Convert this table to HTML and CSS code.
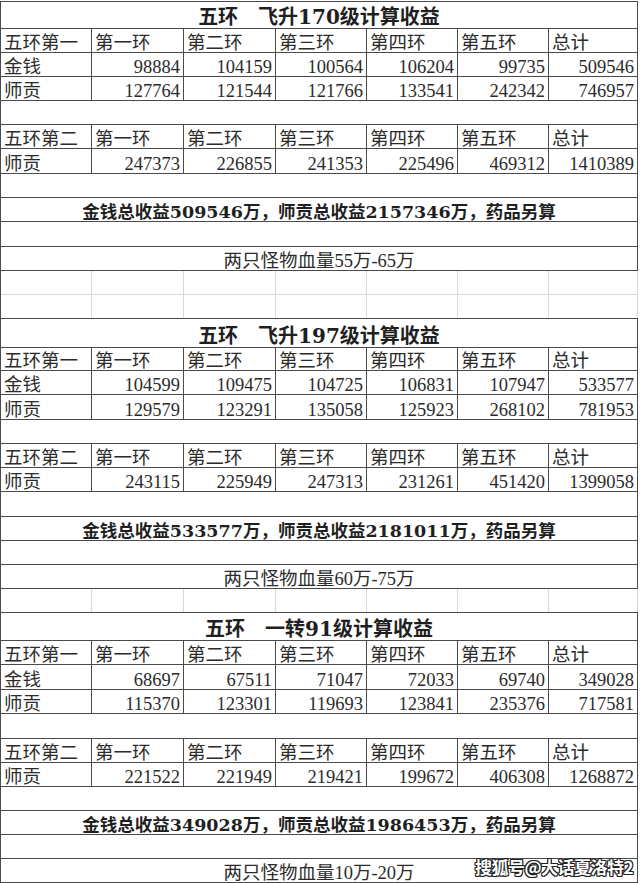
FILE: index.html
```html
<!DOCTYPE html>
<html lang="zh-CN">
<head>
<meta charset="utf-8">
<title>五环收益</title>
<link rel="stylesheet" href="styles.css">
</head>
<body>
<div class="sheet">
  <!-- 区块一 -->
  <div class="row title"><div class="cell span">五环　飞升170级计算收益</div></div>
  <div class="row"><div class="cell">五环第一</div><div class="cell">第一环</div><div class="cell">第二环</div><div class="cell">第三环</div><div class="cell">第四环</div><div class="cell">第五环</div><div class="cell">总计</div></div>
  <div class="row"><div class="cell">金钱</div><div class="cell num">98884</div><div class="cell num">104159</div><div class="cell num">100564</div><div class="cell num">106204</div><div class="cell num">99735</div><div class="cell num">509546</div></div>
  <div class="row"><div class="cell">师贡</div><div class="cell num">127764</div><div class="cell num">121544</div><div class="cell num">121766</div><div class="cell num">133541</div><div class="cell num">242342</div><div class="cell num">746957</div></div>
  <div class="row"><div class="cell span"></div></div>
  <div class="row"><div class="cell">五环第二</div><div class="cell">第一环</div><div class="cell">第二环</div><div class="cell">第三环</div><div class="cell">第四环</div><div class="cell">第五环</div><div class="cell">总计</div></div>
  <div class="row tall"><div class="cell">师贡</div><div class="cell num">247373</div><div class="cell num">226855</div><div class="cell num">241353</div><div class="cell num">225496</div><div class="cell num">469312</div><div class="cell num">1410389</div></div>
  <div class="row"><div class="cell span"></div></div>
  <div class="row sum"><div class="cell span">金钱总收益509546万，师贡总收益2157346万，药品另算</div></div>
  <div class="row tall"><div class="cell span"></div></div>
  <div class="row"><div class="cell span">两只怪物血量55万-65万</div></div>
  <div class="row light"><div class="cell"></div><div class="cell"></div><div class="cell"></div><div class="cell"></div><div class="cell"></div><div class="cell"></div><div class="cell"></div></div>
  <div class="row light edge"><div class="cell"></div><div class="cell"></div><div class="cell"></div><div class="cell"></div><div class="cell"></div><div class="cell"></div><div class="cell"></div></div>

  <!-- 区块二 -->
  <div class="row title t29"><div class="cell span">五环　飞升197级计算收益</div></div>
  <div class="row short"><div class="cell">五环第一</div><div class="cell">第一环</div><div class="cell">第二环</div><div class="cell">第三环</div><div class="cell">第四环</div><div class="cell">第五环</div><div class="cell">总计</div></div>
  <div class="row"><div class="cell">金钱</div><div class="cell num">104599</div><div class="cell num">109475</div><div class="cell num">104725</div><div class="cell num">106831</div><div class="cell num">107947</div><div class="cell num">533577</div></div>
  <div class="row tall"><div class="cell">师贡</div><div class="cell num">129579</div><div class="cell num">123291</div><div class="cell num">135058</div><div class="cell num">125923</div><div class="cell num">268102</div><div class="cell num">781953</div></div>
  <div class="row"><div class="cell span"></div></div>
  <div class="row"><div class="cell">五环第二</div><div class="cell">第一环</div><div class="cell">第二环</div><div class="cell">第三环</div><div class="cell">第四环</div><div class="cell">第五环</div><div class="cell">总计</div></div>
  <div class="row"><div class="cell">师贡</div><div class="cell num">243115</div><div class="cell num">225949</div><div class="cell num">247313</div><div class="cell num">231261</div><div class="cell num">451420</div><div class="cell num">1399058</div></div>
  <div class="row tall"><div class="cell span"></div></div>
  <div class="row sum"><div class="cell span">金钱总收益533577万，师贡总收益2181011万，药品另算</div></div>
  <div class="row"><div class="cell span"></div></div>
  <div class="row"><div class="cell span">两只怪物血量60万-75万</div></div>
  <div class="row light edge"><div class="cell"></div><div class="cell"></div><div class="cell"></div><div class="cell"></div><div class="cell"></div><div class="cell"></div><div class="cell"></div></div>

  <!-- 区块三 -->
  <div class="row title t28"><div class="cell span">五环　一转91级计算收益</div></div>
  <div class="row"><div class="cell">五环第一</div><div class="cell">第一环</div><div class="cell">第二环</div><div class="cell">第三环</div><div class="cell">第四环</div><div class="cell">第五环</div><div class="cell">总计</div></div>
  <div class="row tall"><div class="cell">金钱</div><div class="cell num">68697</div><div class="cell num">67511</div><div class="cell num">71047</div><div class="cell num">72033</div><div class="cell num">69740</div><div class="cell num">349028</div></div>
  <div class="row"><div class="cell">师贡</div><div class="cell num">115370</div><div class="cell num">123301</div><div class="cell num">119693</div><div class="cell num">123841</div><div class="cell num">235376</div><div class="cell num">717581</div></div>
  <div class="row tall"><div class="cell span"></div></div>
  <div class="row"><div class="cell">五环第二</div><div class="cell">第一环</div><div class="cell">第二环</div><div class="cell">第三环</div><div class="cell">第四环</div><div class="cell">第五环</div><div class="cell">总计</div></div>
  <div class="row"><div class="cell">师贡</div><div class="cell num">221522</div><div class="cell num">221949</div><div class="cell num">219421</div><div class="cell num">199672</div><div class="cell num">406308</div><div class="cell num">1268872</div></div>
  <div class="row"><div class="cell span"></div></div>
  <div class="row sum"><div class="cell span">金钱总收益349028万，师贡总收益1986453万，药品另算</div></div>
  <div class="row"><div class="cell span"></div></div>
  <div class="row"><div class="cell span">两只怪物血量10万-20万</div></div>
</div>
<div class="watermark">搜狐号@大话夏洛特2</div>
</body>
</html>
```

FILE: styles.css
```css
* {
  box-sizing: border-box;
}

html, body {
  margin: 0;
  padding: 0;
  background: #ffffff;
}

body {
  position: relative;
  width: 640px;
  height: 883px;
  overflow: hidden;
  color: #2b2b2b;
  font-family: "Liberation Serif", "Noto Sans CJK SC", serif;
}

.sheet {
  width: 638px;
  margin-top: 1px;
  border-top: 1px solid #4a4a4a;
  border-left: 1px solid #4a4a4a;
}

.row {
  display: grid;
  grid-template-columns: 91px 92px 92px 91px 91px 91px 89px;
  height: 24px;
  border-bottom: 1px solid #4a4a4a;
}

.row.tall {
  height: 25px;
}

.row.short {
  height: 23px;
}

.row.title {
  height: 27px;
}

.row.title.t28 {
  height: 28px;
}

.row.title.t29 {
  height: 29px;
}

.cell {
  display: flex;
  align-items: flex-end;
  min-width: 0;
  padding: 0 0 0 3px;
  border-right: 1px solid #4a4a4a;
  font-size: 18.5px;
  line-height: 1;
  white-space: nowrap;
}

.cell.num {
  justify-content: flex-end;
  padding: 0 3px 0 0;
}

.cell.span {
  grid-column: 1 / -1;
  justify-content: center;
  padding: 0;
}

.title .cell {
  font-family: "DejaVu Serif", "Noto Sans CJK SC", serif;
  font-weight: 700;
  font-size: 20px;
  line-height: 22px;
  color: #1f1f1f;
}

.sum .cell {
  font-family: "DejaVu Serif", "Noto Sans CJK SC", serif;
  font-weight: 700;
  font-size: 17.5px;
  color: #1f1f1f;
}

.row.light {
  border-bottom-color: #d9d9d9;
}

.row.light .cell {
  border-right-color: #d9d9d9;
}

.row.light.edge {
  border-bottom-color: #4a4a4a;
}

.watermark {
  position: absolute;
  left: 475px;
  top: 858px;
  font-family: "Noto Sans CJK SC", sans-serif;
  font-weight: 700;
  font-size: 17px;
  line-height: 1;
  color: #ffffff;
  letter-spacing: -0.5px;
  text-shadow:
    1px 0 #222, -1px 0 #222, 0 1px #222, 0 -1px #222,
    1px 1px #222, -1px -1px #222, 1px -1px #222, -1px 1px #222;
}
```
